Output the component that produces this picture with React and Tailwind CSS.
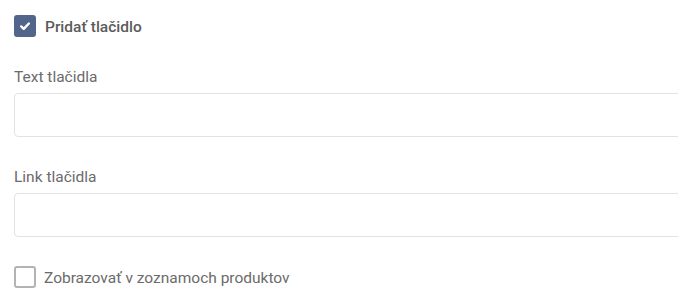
import React, { useState } from 'react';

const Check = () => (
  <svg viewBox="0 0 12 12" className="h-[12px] w-[12px]" fill="none">
    <path d="M2.2 6.4l2.5 2.4L9.9 3.5" stroke="white" strokeWidth="2.4" strokeLinecap="round" strokeLinejoin="round" />
  </svg>
);

const App = () => {
  const [addButton, setAddButton] = useState(true);
  const [showInLists, setShowInLists] = useState(false);

  return (
    <div className="w-[678px] h-[307px] overflow-hidden bg-white pl-[14px] pt-[15px] font-['Roboto',sans-serif]">
      {/* Add button checkbox */}
      <label className="flex items-center gap-[9px] cursor-pointer">
        <span
          onClick={() => setAddButton(!addButton)}
          className={`flex h-[22px] w-[22px] items-center justify-center rounded-[3px] ${
            addButton ? 'bg-[#52658a]' : 'border-2 border-[#b3b3b3] bg-white'
          }`}
        >
          {addButton && <Check />}
        </span>
        <span className="pt-[2px] text-[15.5px] leading-[20px] font-medium text-[#5b5b5b]">Pridať tlačidlo</span>
      </label>

      {/* Button text */}
      <div className="mt-[30px]">
        <div className="text-[15.5px] leading-[20px] text-[#6b6b6b]">Text tlačidla</div>
        <input
          type="text"
          className="mt-[6px] block h-[44px] w-[680px] rounded-[4px] border border-[#e2e2e2] bg-white px-3 text-[15px] outline-none"
        />
      </div>

      {/* Button link */}
      <div className="mt-[30px]">
        <div className="text-[15.5px] leading-[20px] text-[#6b6b6b]">Link tlačidla</div>
        <input
          type="text"
          className="mt-[6px] block h-[44px] w-[680px] rounded-[4px] border border-[#e2e2e2] bg-white px-3 text-[15px] outline-none"
        />
      </div>

      {/* Show in product lists */}
      <label className="mt-[29px] flex items-center gap-[8px] cursor-pointer">
        <span
          onClick={() => setShowInLists(!showInLists)}
          className={`flex h-[22px] w-[22px] items-center justify-center rounded-[3px] ${
            showInLists ? 'bg-[#52658a]' : 'border-2 border-[#b3b3b3] bg-white'
          }`}
        >
          {showInLists && <Check />}
        </span>
        <span className="pt-[1px] text-[15.5px] leading-[20px] text-[#6b6b6b]">Zobrazovať v zoznamoch produktov</span>
      </label>
    </div>
  );
};

export default App;
